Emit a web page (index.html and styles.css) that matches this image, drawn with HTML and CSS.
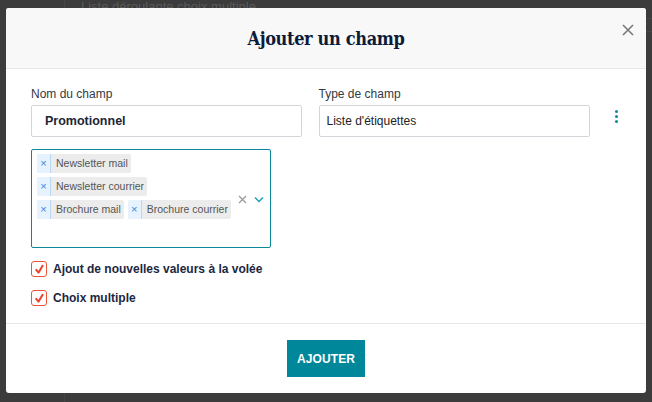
FILE: index.html
```html
<!DOCTYPE html>
<html lang="fr">
<head>
<meta charset="utf-8">
<title>Ajouter un champ</title>
<link rel="stylesheet" href="styles.css">
</head>
<body>
<div class="backdrop">
  <div class="bg-side"></div>
  <div class="bg-main">
    <div class="bg-row">Liste déroulante choix multiple</div>
    <div class="bg-row"></div>
  </div>
</div>

<div class="modal">
  <div class="modal-header">
    <h1 class="modal-title">Ajouter un champ</h1>
    <button class="close-btn" aria-label="Fermer">
      <svg width="12" height="12" viewBox="0 0 12 12"><path d="M1 1L11 11M11 1L1 11" stroke="#7a7a7a" stroke-width="1.6" fill="none"/></svg>
    </button>
  </div>

  <div class="modal-body">
    <div class="field-row">
      <div class="field">
        <label class="field-label">Nom du champ</label>
        <div class="input input-bold">Promotionnel</div>
      </div>
      <div class="field">
        <label class="field-label">Type de champ</label>
        <div class="input input-type">Liste d'étiquettes</div>
      </div>
      <div class="kebab">
        <span class="dot"></span><span class="dot"></span><span class="dot"></span>
      </div>
    </div>

    <div class="multi">
      <div class="values">
        <span class="tag"><span class="tag-x">×</span><span class="tag-label">Newsletter mail</span></span>
        <span class="tag"><span class="tag-x">×</span><span class="tag-label">Newsletter courrier</span></span>
        <span class="tag"><span class="tag-x">×</span><span class="tag-label">Brochure mail</span></span>
        <span class="tag"><span class="tag-x">×</span><span class="tag-label">Brochure courrier</span></span>
        <span class="tag-input"></span>
      </div>
      <div class="indicators">
        <svg class="clear" width="9" height="9" viewBox="0 0 9 9"><path d="M1 1L8 8M8 1L1 8" stroke="#9a9a9a" stroke-width="1.3" fill="none"/></svg>
        <svg class="chev" width="10" height="7" viewBox="0 0 10 7"><path d="M1 1.5L5 5.5L9 1.5" stroke="#1aa3b5" stroke-width="1.5" fill="none"/></svg>
      </div>
    </div>

    <div class="check-row">
      <span class="checkbox"><svg width="11" height="11" viewBox="0 0 11 11"><path d="M2.2 5.8L4.6 8.6L8.6 1.8" stroke="#e8402a" stroke-width="2" fill="none" stroke-linecap="round" stroke-linejoin="round"/></svg></span>
      <span class="check-label">Ajout de nouvelles valeurs à la volée</span>
    </div>
    <div class="check-row">
      <span class="checkbox"><svg width="11" height="11" viewBox="0 0 11 11"><path d="M2.2 5.8L4.6 8.6L8.6 1.8" stroke="#e8402a" stroke-width="2" fill="none" stroke-linecap="round" stroke-linejoin="round"/></svg></span>
      <span class="check-label">Choix multiple</span>
    </div>
  </div>

  <div class="modal-footer">
    <button class="primary-btn">AJOUTER</button>
  </div>
</div>
</body>
</html>
```

FILE: styles.css
```css
* { box-sizing: border-box; }
html, body { margin: 0; padding: 0; }
body {
  width: 652px;
  height: 402px;
  background: #3c3c3c;
  font-family: "Liberation Sans", Arial, sans-serif;
  overflow: hidden;
  position: relative;
}

.backdrop {
  display: flex;
  height: 100%;
}
.bg-side {
  width: 65px;
  border-right: 1px solid #464646;
}
.bg-main { flex: 1; }
.bg-row {
  height: 23px;
  border-bottom: 1px solid #454545;
  padding-left: 16px;
  padding-top: 2px;
  font-size: 13px;
  line-height: 18px;
  color: #5a5a5a;
  margin-top: -4px;
}
.bg-row + .bg-row { margin-top: 0; height: 13px; padding-top: 0; }

.modal {
  position: absolute;
  left: 6px;
  top: 8px;
  width: 640px;
  height: 385px;
  background: #ffffff;
  border-radius: 3px;
  display: flex;
  flex-direction: column;
  overflow: hidden;
}

.modal-header {
  height: 61px;
  background: #f8f8f8;
  border-bottom: 1px solid #e6e6e6;
  display: flex;
  align-items: center;
  justify-content: center;
  position: relative;
}
.modal-title {
  margin: 0;
  font-family: "DejaVu Serif", "Liberation Serif", serif;
  font-stretch: condensed;
  font-weight: bold;
  font-size: 18px;
  color: #0d1b3a;
  letter-spacing: -0.35px;
  padding-top: 1px;
}
.close-btn {
  position: absolute;
  right: 12px;
  top: 16px;
  border: 0;
  background: transparent;
  padding: 0;
  width: 12px;
  height: 12px;
  display: flex;
}

.modal-body {
  flex: 1;
  padding: 18px 25px 0 25px;
  border-bottom: 1px solid #e6e6e6;
}

.field-row {
  display: flex;
  gap: 17px;
  align-items: flex-start;
}
.field {
  display: flex;
  flex-direction: column;
}
.field:first-child { width: 271px; }
.field:nth-child(2) { width: 272px; }
.field-label {
  font-size: 12px;
  line-height: 14px;
  color: #333a44;
  margin-bottom: 4px;
}
.input {
  height: 32px;
  border: 1px solid #d2d6db;
  border-radius: 2px;
  display: flex;
  align-items: center;
  font-size: 12px;
  color: #222;
}
.input-bold {
  font-weight: bold;
  font-size: 12.5px;
  padding-left: 13px;
  color: #1c2536;
}
.input-type { padding-left: 7px; }

.kebab {
  margin-left: 4px;
  margin-top: 23px;
  display: flex;
  flex-direction: column;
  gap: 2px;
  width: 10px;
  align-items: center;
}
.dot {
  width: 3px;
  height: 3px;
  border-radius: 50%;
  background: #12899a;
}

.multi {
  margin-top: 12px;
  width: 240px;
  height: 99px;
  border: 1px solid #0a8798;
  border-radius: 2px;
  display: flex;
  align-items: center;
  padding: 4px 0 0 5px;
}
.values {
  flex: 1;
  display: flex;
  flex-wrap: wrap;
  column-gap: 4px;
  row-gap: 4px;
  align-self: flex-start;
}
.tag {
  display: flex;
  height: 19px;
  background: #ececec;
  border-radius: 2px;
  font-size: 10.5px;
  line-height: 19px;
  color: #555;
}
.tag-x {
  width: 14px;
  background: #e6f2fd;
  border-right: 1px solid #b9d8f5;
  color: #3a86e0;
  text-align: center;
  font-size: 11px;
  border-radius: 2px 0 0 2px;
}
.tag-label { padding: 0 3px 0 5px; }
.tag-input { width: 100%; height: 20px; }

.indicators {
  display: flex;
  align-items: center;
  gap: 7px;
  width: 34px;
  padding-left: 2px;
  margin-top: -3px;
}

.check-row {
  display: flex;
  align-items: center;
  gap: 6px;
  height: 16px;
  margin-top: 13px;
}
.check-row + .check-row { margin-top: 13px; }
.checkbox {
  width: 16px;
  height: 16px;
  border: 1.5px solid #ee5438;
  border-radius: 3px;
  display: flex;
  align-items: center;
  justify-content: center;
  background: #fff;
}
.check-label {
  font-size: 12px;
  font-weight: bold;
  color: #1c2740;
}

.modal-footer {
  height: 69px;
  display: flex;
  justify-content: center;
  padding-top: 16px;
}
.primary-btn {
  width: 78px;
  height: 37px;
  background: #00879a;
  border: 0;
  border-radius: 0;
  color: #fff;
  font-family: "Liberation Sans", Arial, sans-serif;
  font-weight: bold;
  font-size: 12px;
  letter-spacing: 0.1px;
}
```
